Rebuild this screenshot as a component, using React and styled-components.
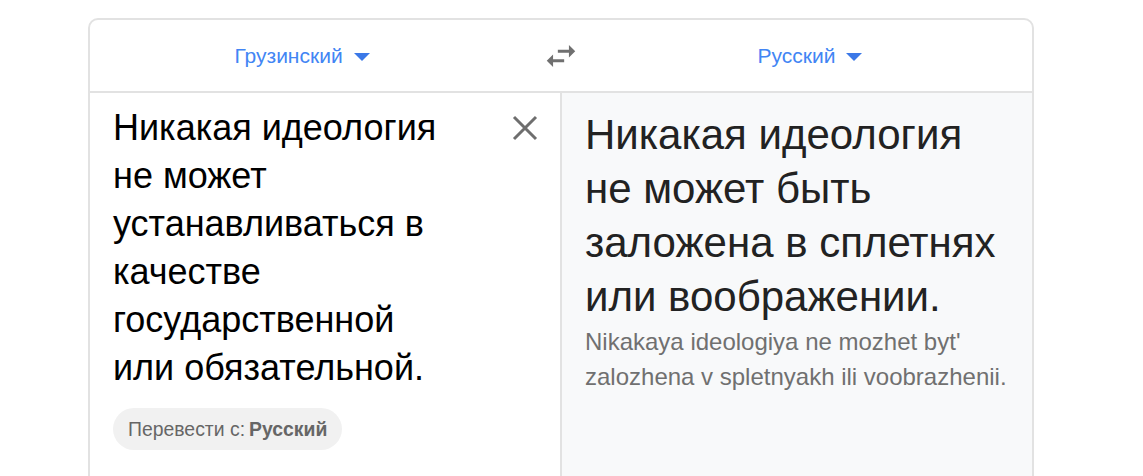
import styled, { createGlobalStyle } from 'styled-components';

const GlobalStyle = createGlobalStyle`
  html, body {
    margin: 0;
    padding: 0;
    background: #ffffff;
    font-family: "Liberation Sans", Arial, sans-serif;
  }
`;

const App = () => {
  return (
    <>
      <GlobalStyle />
      <Page>
        <Card>
          <Header>
            <LangButton>
              Грузинский
              <Caret />
            </LangButton>
            <SwapButton aria-label="swap">
              <svg width="38" height="38" viewBox="0 0 24 24" fill="#707070">
                <path d="M6.99 11L3 15l3.99 4v-3H14v-2H6.99v-3zM21 9l-3.99-4v3H10v2h7.01v3L21 9z" />
              </svg>
            </SwapButton>
            <LangButton>
              Русский
              <Caret />
            </LangButton>
          </Header>
          <Body>
            <SourcePane>
              <SourceRow>
                <SourceText>
                  Никакая идеология не может устанавливаться в качестве государственной или обязательной.
                </SourceText>
                <ClearButton aria-label="clear">
                  <svg width="26" height="26" viewBox="0 0 26 26">
                    <path d="M2 2L24 24M24 2L2 24" stroke="#6e6e6e" strokeWidth="3" />
                  </svg>
                </ClearButton>
              </SourceRow>
              <DetectChip>
                Перевести с: <b>Русский</b>
              </DetectChip>
            </SourcePane>
            <TargetPane>
              <TargetText>Никакая идеология не может быть заложена в сплетнях или воображении.</TargetText>
              <Translit>Nikakaya ideologiya ne mozhet byt' zalozhena v spletnyakh ili voobrazhenii.</Translit>
            </TargetPane>
          </Body>
        </Card>
      </Page>
    </>
  );
};

const Page = styled.div`
  padding: 18px 0 0 88px;
  height: 476px;
  box-sizing: border-box;
  overflow: hidden;
`;

const Card = styled.div`
  width: 946px;
  height: 520px;
  border: 2px solid #e2e2e2;
  border-radius: 10px;
  box-sizing: border-box;
  display: flex;
  flex-direction: column;
  overflow: hidden;
`;

const Header = styled.div`
  height: 71px;
  display: grid;
  grid-template-columns: 424px 94px 1fr;
  padding-right: 20px;
  border-bottom: 2px solid #e2e2e2;
  align-items: center;
`;

const LangButton = styled.div`
  display: flex;
  justify-content: center;
  align-items: center;
  gap: 11px;
  color: #4285f4;
  font-size: 21px;
`;

const Caret = styled.span`
  width: 0;
  height: 0;
  border-left: 8px solid transparent;
  border-right: 8px solid transparent;
  border-top: 8px solid #3b78e7;
  margin-top: 3px;
`;

const SwapButton = styled.div`
  display: flex;
  justify-content: center;
  align-items: center;
`;

const Body = styled.div`
  flex: 1;
  display: grid;
  grid-template-columns: 472px 1fr;
`;

const SourcePane = styled.div`
  border-right: 2px solid #e2e2e2;
  padding: 11px 0 0 23px;
`;

const SourceRow = styled.div`
  display: flex;
  justify-content: space-between;
`;

const SourceText = styled.div`
  width: 350px;
  font-size: 36px;
  line-height: 48px;
  color: #000;
`;

const ClearButton = styled.div`
  width: 26px;
  height: 26px;
  margin: 11px 22px 0 0;
`;

const DetectChip = styled.div`
  display: inline-flex;
  align-items: center;
  gap: 4px;
  margin-top: 16px;
  height: 42px;
  padding: 0 15px;
  border-radius: 21px;
  background: #f1f1f1;
  color: #666;
  font-size: 19.4px;

  b {
    font-weight: 700;
  }
`;

const TargetPane = styled.div`
  background: #f8f9fa;
  padding: 15px 24px 0 23px;
`;

const TargetText = styled.div`
  font-size: 42px;
  line-height: 54px;
  color: #222;
`;

const Translit = styled.div`
  font-size: 24px;
  line-height: 35px;
  color: #707070;
`;

export default App;
